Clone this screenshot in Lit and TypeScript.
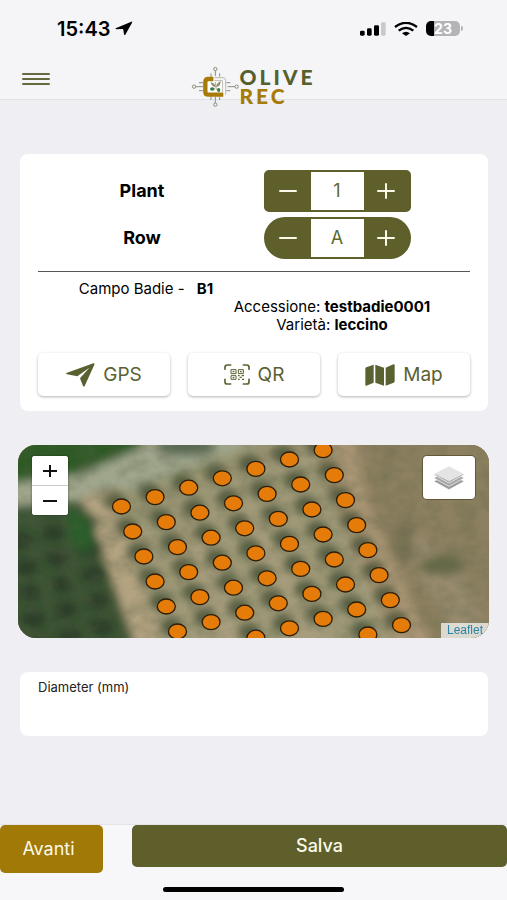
import { LitElement, html, svg, css } from "lit";
import { customElement, property, state } from "lit/decorators.js";

const sans = css`Inter, "Noto Sans", sans-serif`;

@customElement("status-bar")
class StatusBar extends LitElement {
  static styles = css`
    :host {
      display: flex;
      align-items: center;
      justify-content: space-between;
      height: 57px;
      padding: 0 44px 0 57px;
      box-sizing: border-box;
      font: 600 20px/24px ${sans};
      color: #000;
    }
    .time,
    .signals {
      display: flex;
      align-items: center;
    }
    .time {
      gap: 5px;
    }
    .signals {
      gap: 8px;
    }
    svg {
      display: block;
    }
    .battery {
      display: flex;
      align-items: center;
      gap: 1px;
    }
    .cell {
      width: 34px;
      height: 15px;
      border-radius: 5px;
      background: linear-gradient(90deg, #000 23%, #b4b4b6 23%);
      color: #fff;
      font-size: 14px;
      line-height: 15px;
      font-weight: 700;
      text-align: center;
    }
    .cap {
      width: 2px;
      height: 5px;
      border-radius: 0 2px 2px 0;
      background: #b4b4b6;
    }
  `;

  render() {
    return html`
      <div class="time">
        <span>15:43</span>
        <svg width="18" height="15" viewBox="0 0 54 45" aria-hidden="true">
          <path d="M2 22 L49 2 Q53 1 51 5 L31 41 Q28 44 27 40 L25 26 Q25 24 22 24 L4 25 Q0 24 2 22Z" />
        </svg>
      </div>
      <div class="signals">
        <svg width="26" height="14" viewBox="0 0 78 42" aria-hidden="true">
          <rect x="0" y="26" width="14" height="15" rx="4" />
          <rect x="21" y="19" width="14" height="22" rx="4" />
          <rect x="42" y="10" width="15" height="31" rx="4" />
          <rect x="63" y="1" width="14" height="40" rx="4" fill="#c9c9cc" />
        </svg>
        <svg width="24" height="14" viewBox="0 0 72 42" aria-hidden="true">
          <g fill="none" stroke="#000" stroke-width="7">
            <path d="M3 15 Q36 -10 69 15" />
            <path d="M14 26 Q36 9 58 26" />
          </g>
          <path d="M24 34 Q36 24 48 34 L36 42Z" />
        </svg>
        <div class="battery"><span class="cell">23</span><span class="cap"></span></div>
      </div>
    `;
  }
}

@customElement("brand-logo")
class BrandLogo extends LitElement {
  static styles = css`
    :host {
      display: flex;
      align-items: flex-start;
    }
    svg {
      display: block;
    }
    .name {
      display: flex;
      flex-direction: column;
      padding-top: 1px;
      font: 900 21px/19px Lato, "Open Sans", sans-serif;
      letter-spacing: 3px;
      color: #56602f;
    }
    .rec {
      color: #a67b08;
    }
  `;

  render() {
    return html`
      <svg width="48" height="41" viewBox="0 0 144 123" aria-hidden="true">
        <g fill="none" stroke="#8b8f7c" stroke-width="3">
          <path d="M73 14V30M73 92V111M14 62H36M110 62H132" />
          <path d="M60 22V32M86 22V32M60 92V102M86 92V102M24 50H36M24 74H36M106 50H118M106 74H118" />
          <circle cx="73" cy="9" r="5" />
          <circle cx="73" cy="116" r="5" />
          <circle cx="9" cy="62" r="5" />
          <circle cx="137" cy="62" r="5" />
        </g>
        <rect x="46" y="42" width="54" height="42" fill="#fff" />
        <path d="M70 35H96Q104 35 104 44V86M70 44H95V78" fill="none" stroke="#b9bbae" stroke-width="3" />
        <path d="M67 39H52Q43 39 43 48V77Q43 86 52 86H97" fill="none" stroke="#a67b08" stroke-width="13" />
        <path d="M60 50Q72 52 73 62Q62 60 60 50M88 47Q76 52 77 62Q88 60 88 47M73 48L76 72" fill="#9a967c" stroke="#8a8770" stroke-width="2" />
        <ellipse cx="64" cy="69" rx="7" ry="5" fill="#3f7d46" />
        <ellipse cx="83" cy="72" rx="5" ry="6" fill="#3f7d46" />
      </svg>
      <div class="name"><span>OLIVE</span><span class="rec">REC</span></div>
    `;
  }
}

@customElement("stepper-field")
class StepperField extends LitElement {
  @property() label = "";
  @property() value = "";
  @property({ type: Boolean, reflect: true }) round = false;

  static styles = css`
    :host {
      display: grid;
      grid-template-columns: 8fr 7fr;
      align-items: center;
      justify-items: center;
      padding-right: 42px;
      font-family: ${sans};
    }
    label {
      font-size: 18px;
      line-height: 22px;
      font-weight: 700;
    }
    .control {
      display: flex;
      width: 147px;
      height: 42px;
      box-sizing: border-box;
      border: 2px solid #5e5f2b;
      border-radius: 5px;
      background: #5e5f2b;
      overflow: hidden;
    }
    :host([round]) .control {
      border-radius: 21px;
    }
    button {
      flex: 1;
      display: grid;
      place-items: center;
      padding: 0;
      border: 0;
      background: none;
    }
    input {
      width: 53px;
      box-sizing: border-box;
      padding: 0;
      border: 0;
      border-radius: 0;
      background: #fff;
      color: #5e6a30;
      font: 400 18px/22px ${sans};
      text-align: center;
    }
    svg {
      display: block;
      fill: none;
      stroke: #fbfaea;
      stroke-width: 2;
      stroke-linecap: round;
    }
  `;

  render() {
    return html`
      <label for="field">${this.label}</label>
      <div class="control">
        <button aria-label="Decrease ${this.label}">
          <svg width="20" height="16" viewBox="0 0 20 16"><path d="M2 8H18" /></svg>
        </button>
        <input id="field" .value=${this.value} />
        <button aria-label="Increase ${this.label}">
          <svg width="20" height="16" viewBox="0 0 20 16"><path d="M2 8H18M10 1V15" /></svg>
        </button>
      </div>
    `;
  }
}

@customElement("field-map")
class FieldMap extends LitElement {
  static styles = css`
    :host {
      display: block;
      position: relative;
      height: 193px;
      border-radius: 18px;
      overflow: hidden;
      background: #8d8264;
      font-family: ${sans};
    }
    .tiles {
      display: block;
      width: 100%;
      height: 100%;
    }
    .zoom {
      position: absolute;
      top: 11px;
      left: 14px;
      display: flex;
      flex-direction: column;
      width: 36px;
      border-radius: 3px;
      overflow: hidden;
      background: #fff;
      box-shadow: 0 0 2px rgba(0, 0, 0, 0.5);
    }
    .zoom button {
      display: grid;
      place-items: center;
      height: 29px;
      padding: 0;
      border: 0;
      background: #fff;
    }
    .zoom button + button {
      height: 30px;
      border-top: 1px solid #ccc;
    }
    .zoom svg {
      stroke: #111;
      stroke-width: 2;
    }
    .layers {
      position: absolute;
      top: 11px;
      right: 14px;
      display: grid;
      place-items: center;
      width: 52px;
      height: 43px;
      padding: 0;
      border: 0;
      border-radius: 4px;
      background: #fff;
      box-shadow: 0 0 0 1px rgba(60, 50, 30, 0.5);
    }
    .credit {
      position: absolute;
      right: 0;
      bottom: 0;
      padding: 0 6px;
      background: rgba(255, 255, 255, 0.7);
      font: 500 12px/15px "Liberation Sans", sans-serif;
    }
    .credit a {
      color: #2b84a8;
      text-decoration: none;
    }
  `;

  /* Trees stand on a skewed planting grid: one step along a row, one step down. */
  private trees() {
    const out: { x: number; y: number }[] = [];
    for (let r = 0; r < 8; r++) {
      for (let c = 0; c < 7; c++) {
        const x = 104 + 33.6 * c + 11.2 * r;
        const y = 61.5 - 9.4 * c + 25 * r;
        if (y < 196) out.push({ x, y });
      }
    }
    return out;
  }

  private grove() {
    const out: { x: number; y: number }[] = [];
    for (let r = 0; r < 6; r++) {
      for (let c = 0; c < 4; c++) {
        const x = c * 32 + 4 + r * 4;
        const y = 96 + r * 26 - c * 9;
        if (x < 62 + y * 0.25) out.push({ x, y });
      }
    }
    return out;
  }

  render() {
    const trees = this.trees();
    return html`
      <svg class="tiles" viewBox="0 0 472 193" preserveAspectRatio="xMidYMid slice" aria-hidden="true">
        <defs>
          <filter id="soft" x="-10%" y="-10%" width="120%" height="120%"><feGaussianBlur stdDeviation="5" /></filter>
          <filter id="leaf" x="-10%" y="-10%" width="120%" height="120%"><feGaussianBlur stdDeviation="4" /></filter>
          <filter id="grain" x="0" y="0" width="100%" height="100%">
            <feTurbulence type="fractalNoise" baseFrequency="0.05 0.07" numOctaves="3" seed="4" />
            <feColorMatrix values="0 0 0 0 0.1  0 0 0 0 0.12  0 0 0 0 0.06  1.6 0 0 0 -0.6" />
          </filter>
        </defs>
        <rect width="472" height="193" fill="#96896b" />
        <g filter="url(#soft)">
          <path d="M-20 -20H140L110 25L-20 50Z" fill="#2f5a28" />
          <path d="M130 -20H330L100 62Z" fill="#9a9673" />
          <path d="M-20 40L60 30L150 -8H250L130 40L60 58L-20 75Z" fill="#9fa68c" />
          <ellipse cx="168" cy="2" rx="30" ry="9" fill="#566851" />
          <path d="M-20 62L64 56L122 210H-20Z" fill="#3d5434" />
          <path d="M64 50L100 44L162 210H122Z" fill="#b3a381" />
          <path d="M96 58L296 0L400 210H150Z" fill="#a09a79" />
          <path d="M290 -10H340L420 210H382Z" fill="#ab9776" />
          <path d="M336 -10H490V210H418L350 60Z" fill="#8c8061" />
          <path d="M392 80L452 140L470 190H440L402 130Z" fill="#988b6e" />
          <ellipse cx="425" cy="120" rx="24" ry="10" fill="#676b4a" />
          <ellipse cx="385" cy="95" rx="12" ry="22" fill="#7d7456" />
          <path d="M150 90L180 78L240 210H205ZM220 70L250 60L312 210H280Z" fill="#aea182" opacity="0.6" />
        </g>
        <g filter="url(#leaf)">
          ${this.grove().map((t) => svg`<ellipse cx=${t.x} cy=${t.y} rx="12" ry="9" fill="#1a2f1a" opacity="0.6" />`)}
          <path d="M50 60L72 76L74 110L52 96Z" fill="#2c5f2c" />
          ${trees.map((t) => svg`<ellipse cx=${t.x - 6} cy=${t.y - 5} rx="11" ry="9" fill="#38452f" opacity="0.75" />`)}
        </g>
        <rect width="472" height="193" filter="url(#grain)" opacity="0.4" />
        ${trees.map(
          (t) => svg`<ellipse cx=${t.x} cy=${t.y} rx="9" ry="7.5" fill="#e57c0a" stroke="#2b1c06" stroke-width="1.3" />`
        )}
      </svg>
      <div class="zoom">
        <button aria-label="Zoom in"><svg width="14" height="12" viewBox="0 0 14 12"><path d="M0 6H14M7 0V12" /></svg></button>
        <button aria-label="Zoom out"><svg width="14" height="12" viewBox="0 0 14 12"><path d="M0 6H14" /></svg></button>
      </div>
      <button class="layers" aria-label="Layers">
        <svg width="32" height="26" viewBox="0 0 96 78">
          <path d="M2 49L48 26L94 49L48 74Z" fill="#9a9a9a" stroke="#fff" stroke-width="2" />
          <path d="M2 39L48 16L94 39L48 64Z" fill="#a6a6a6" stroke="#fff" stroke-width="2" />
          <path d="M2 29L48 6L94 29L48 54Z" fill="#a6a6a6" stroke="#fff" stroke-width="2" />
          <path d="M4 27L48 4L92 27L48 49Z" fill="#e4e4e4" />
        </svg>
      </button>
      <div class="credit"><a href="#">Leaflet</a></div>
    `;
  }
}

@customElement("app-root")
class AppRoot extends LitElement {
  @state() private plant = "1";
  @state() private row = "A";

  static styles = css`
    :host {
      display: flex;
      flex-direction: column;
      min-height: 100vh;
      background: #efeef3;
      color: #000;
      font-family: ${sans};
    }
    header {
      background: #f5f5f8;
      border-bottom: 1px solid #e2e2e6;
    }
    .toolbar {
      display: grid;
      grid-template-columns: 1fr auto 1fr;
      align-items: start;
      height: 42px;
      padding: 0 22px;
    }
    .menu {
      justify-self: start;
      margin-top: 12px;
      padding: 3px 0;
      border: 0;
      background: none;
    }
    .menu svg {
      display: block;
    }
    brand-logo {
      margin-top: 9px;
    }
    main {
      flex: 1;
      display: flex;
      flex-direction: column;
      gap: 34px;
      padding: 54px 19px 34px 20px;
    }
    .card {
      background: #fff;
      border-radius: 8px;
      padding: 16px 18px 15px;
    }
    .steppers {
      display: flex;
      flex-direction: column;
      gap: 5px;
      padding-bottom: 12px;
      border-bottom: 1px solid #55555a;
    }
    .details {
      display: grid;
      grid-template-columns: 1fr 1fr;
      padding-top: 8px;
      font-size: 15px;
      line-height: 18px;
    }
    .field-name {
      grid-column: 1;
      justify-self: center;
    }
    .field-name b {
      margin-left: 8px;
    }
    .accession {
      grid-column: 1 / -1;
      display: flex;
      flex-direction: column;
      align-items: center;
      padding-left: 156px;
    }
    .actions {
      display: grid;
      grid-template-columns: repeat(3, 1fr);
      gap: 18px;
      padding-top: 19px;
    }
    .actions button {
      display: flex;
      align-items: center;
      justify-content: center;
      gap: 8px;
      height: 43px;
      padding: 0;
      border: 0;
      border-radius: 5px;
      background: #fff;
      box-shadow: 0 1px 3px rgba(0, 0, 0, 0.3);
      color: #5a6130;
      font: 400 19px/22px ${sans};
    }
    field-map {
      margin: 0 -1px 0 -2px;
    }
    .measure {
      display: flex;
      flex-direction: column;
      padding: 7px 18px 9px;
    }
    .measure label {
      font-size: 13px;
      line-height: 16px;
      color: #222;
    }
    .measure input {
      height: 32px;
      padding: 0;
      border: 0;
      background: none;
      font: 400 16px/20px ${sans};
      outline: none;
    }
    footer {
      background: #f7f7f9;
      border-top: 1px solid #e4e4e8;
    }
    .buttons {
      display: flex;
      align-items: flex-start;
      gap: 29px;
    }
    .buttons button {
      border: 0;
      border-radius: 5px;
      color: #fbfae8;
    }
    .next {
      width: 103px;
      height: 48px;
      padding: 0 6px 0 0;
      background: #a17906;
      font: 400 18px/22px ${sans};
    }
    .save {
      flex: 1;
      height: 42px;
      background: #5e5f2b;
      font: 500 18px/22px ${sans};
    }
    .home {
      width: 181px;
      height: 5px;
      margin: 14px auto 8px;
      border-radius: 3px;
      background: #000;
    }
  `;

  render() {
    return html`
      <header>
        <status-bar></status-bar>
        <div class="toolbar">
          <button class="menu" aria-label="Menu">
            <svg width="28" height="14" viewBox="0 0 28 14" fill="none" stroke="#66693c" stroke-width="2" stroke-linecap="round">
              <path d="M1 2H27M1 7H27M1 12H27" />
            </svg>
          </button>
          <brand-logo></brand-logo>
        </div>
      </header>
      <main>
        <section class="card">
          <div class="steppers">
            <stepper-field label="Plant" .value=${this.plant}></stepper-field>
            <stepper-field label="Row" .value=${this.row} round></stepper-field>
          </div>
          <div class="details">
            <div class="field-name">Campo Badie - <b>B1</b></div>
            <div class="accession">
              <span>Accessione: <b>testbadie0001</b></span>
              <span>Varietà: <b>leccino</b></span>
            </div>
          </div>
          <div class="actions">
            <button>
              <svg width="29" height="24" viewBox="0 0 87 72" fill="#5a6130" aria-hidden="true">
                <path d="M1 30L82 1Q87 0 85 5L56 69Q53 72 51 69L42 46L70 14L34 40L3 34Q-1 32 1 30Z" />
              </svg>
              GPS
            </button>
            <button>
              <svg width="26" height="21" viewBox="0 0 78 63" fill="none" stroke="#5a6130" stroke-width="5" stroke-linecap="round" aria-hidden="true">
                <path d="M3 16V10Q3 3 10 3H20M58 3H68Q75 3 75 10V16M75 46V53Q75 60 68 60H58M20 60H10Q3 60 3 53V46" />
                <g stroke-width="3" stroke-linecap="butt">
                  <path d="M21 17H36V29H21ZM43 17H58V29H43ZM21 35H36V46H21Z" />
                  <path d="M26 23H31M48 23H53M26 41H31" stroke-width="4" />
                  <path d="M42 35H47M53 35H60M47 40H53M42 46H47M54 46H60" stroke-width="4" />
                </g>
              </svg>
              QR
            </button>
            <button>
              <svg width="30" height="22" viewBox="0 0 90 66" fill="#5a6130" aria-hidden="true">
                <path d="M26 2V56L4 65Q1 66 1 62V14Q1 11 4 10ZM31 2L57 11V65L31 56ZM62 11L85 1Q89 0 89 4V52Q89 55 86 56L62 65Z" />
              </svg>
              Map
            </button>
          </div>
        </section>
        <field-map></field-map>
        <section class="card measure">
          <label for="diameter">Diameter (mm)</label>
          <input id="diameter" type="text" inputmode="numeric" />
        </section>
      </main>
      <footer>
        <div class="buttons">
          <button class="next">Avanti</button>
          <button class="save">Salva</button>
        </div>
        <div class="home"></div>
      </footer>
    `;
  }
}
